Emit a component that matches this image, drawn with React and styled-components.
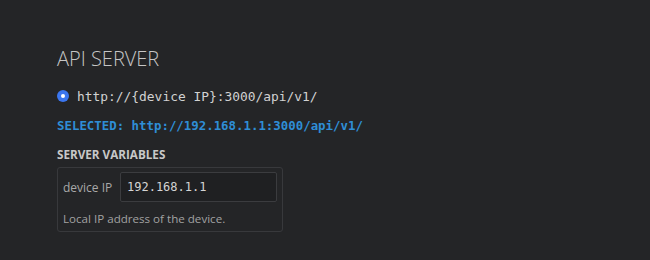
import React from 'react'
import styled, { createGlobalStyle } from 'styled-components'

const GlobalStyle = createGlobalStyle`
  html, body {
    margin: 0;
    background: #242527;
  }
`

const App = () => {
  return (
    <>
      <GlobalStyle />
      <Page>
        <Title>API SERVER</Title>
        <ServerRow>
          <Radio />
          <ServerUrl>http://{'{'}device IP{'}'}:3000/api/v1/</ServerUrl>
        </ServerRow>
        <Selected>SELECTED: http://192.168.1.1:3000/api/v1/</Selected>
        <SectionLabel>SERVER VARIABLES</SectionLabel>
        <VariableBox>
          <VariableRow>
            <VariableName>device IP</VariableName>
            <VariableInput defaultValue="192.168.1.1" />
          </VariableRow>
          <VariableHint>Local IP address of the device.</VariableHint>
        </VariableBox>
      </Page>
    </>
  )
}

export default App

const Page = styled.div`
  padding: 45px 0 0 57px;
  height: 260px;
  box-sizing: border-box;
  font-family: "Open Sans", "Noto Sans", sans-serif;
`

const Title = styled.h2`
  margin: 0;
  font-size: 20px;
  font-weight: 300;
  line-height: 28px;
  color: #c6c6c6;
`

const ServerRow = styled.div`
  margin-top: 13px;
  display: flex;
  align-items: center;
  gap: 8px;
  height: 20px;
`

const Radio = styled.span`
  width: 12px;
  height: 12px;
  border-radius: 50%;
  background: #3b76ef;
  display: flex;
  align-items: center;
  justify-content: center;

  &::after {
    content: "";
    width: 4px;
    height: 4px;
    border-radius: 50%;
    background: #fff;
  }
`

const ServerUrl = styled.span`
  font-family: "DejaVu Sans Mono", monospace;
  font-size: 12.9px;
  color: #d2d2d2;
`

const Selected = styled.div`
  margin-top: 11px;
  font-family: "DejaVu Sans Mono", monospace;
  font-size: 12.4px;
  font-weight: bold;
  line-height: 18px;
  color: #2f8ed6;
`

const SectionLabel = styled.div`
  margin-top: 11px;
  font-size: 11.7px;
  font-weight: 700;
  line-height: 16px;
  color: #c8c8c8;
`

const VariableBox = styled.div`
  margin-top: 5px;
  width: 226px;
  box-sizing: border-box;
  border: 1px solid #38393c;
  border-radius: 3px;
  padding: 4px 5px;
`

const VariableRow = styled.div`
  display: flex;
  align-items: center;
`

const VariableName = styled.span`
  flex: 0 0 57px;
  white-space: nowrap;
  font-size: 12px;
  color: #a9a9a9;
`

const VariableInput = styled.input`
  flex: 1;
  min-width: 0;
  height: 30px;
  box-sizing: border-box;
  margin: 0;
  padding: 0 6px;
  background: #1f2022;
  border: 1px solid #3b3c3f;
  border-radius: 2px;
  font-family: "DejaVu Sans Mono", monospace;
  font-size: 12px;
  color: #d4d4d4;
  outline: none;
`

const VariableHint = styled.div`
  margin-top: 9px;
  font-size: 11.6px;
  line-height: 16px;
  color: #a2a2a2;
`
